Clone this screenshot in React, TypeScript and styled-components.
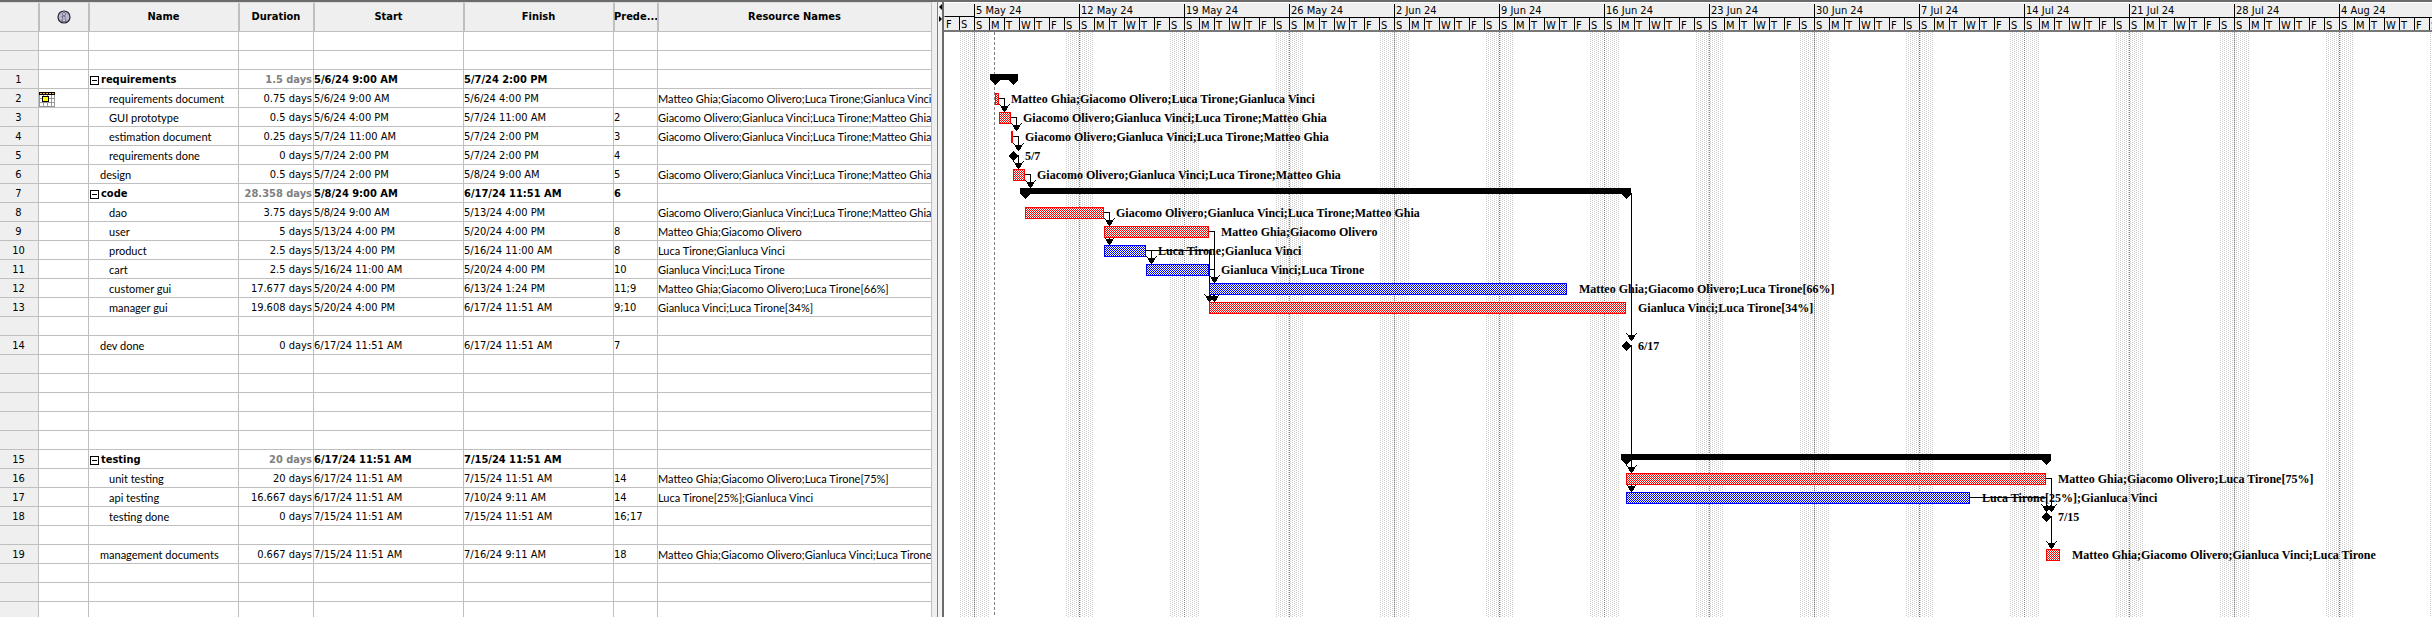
import React from 'react';
import styled, { createGlobalStyle, css } from 'styled-components';

const ROW = 19;
const DAY = 15;
const LINE = '#bfbfbf';
const PANEL = '#efefef';

const GlobalStyle = createGlobalStyle`
  * { box-sizing: border-box; }
  body {
    margin: 0;
    overflow: hidden;
    background: #fff;
    color: #000;
    font-family: 'DejaVu Sans Condensed', 'DejaVu Sans', sans-serif;
    font-stretch: condensed;
    font-size: 11px;
    line-height: 16px;
  }
`;

const Window = styled.main`
  display: flex;
  height: 100vh;
  overflow: hidden;
`;

const SheetPanel = styled.section`
  flex: none;
  display: flex;
  padding-right: 5px;
  border-top: 2px solid #6b6b6b;
  border-right: 1px solid #80838a;
  background: ${PANEL};
  overflow: hidden;
`;

const Sheet = styled.table`
  align-self: flex-start;
  width: 932px;
  table-layout: fixed;
  border-collapse: separate;
  border-spacing: 0;
  background: #fff;
`;

const HeadCell = styled.th`
  height: 30px;
  padding: 0;
  border-right: 1px solid ${LINE};
  border-bottom: 1px solid ${LINE};
  border-top: 1px solid #dcdcdc;
  background: ${PANEL};
  overflow: hidden;
  white-space: nowrap;
  text-align: center;
  & + & {
    box-shadow: inset 1px 0 ${LINE};
  }
`;

const cell = css`
  height: ${ROW}px;
  padding: 2px 1px 0 0;
  border-right: 1px solid ${LINE};
  border-bottom: 1px solid ${LINE};
  overflow: hidden;
  white-space: nowrap;
`;

const RowNumber = styled.th`
  ${cell}
  background: ${PANEL};
  font-weight: 400;
  text-align: center;
`;

const Cell = styled.td<{ $bold?: boolean; $muted?: boolean; $right?: boolean }>`
  ${cell}
  font-weight: ${(p) => (p.$bold ? 700 : 400)};
  color: ${(p) => (p.$muted ? '#808080' : '#000')};
  text-align: ${(p) => (p.$right ? 'right' : 'left')};
`;

const WordCell = styled(Cell)`
  font-family: ${(p) => (p.$bold ? 'inherit' : "Lato, 'DejaVu Sans Condensed', sans-serif")};
`;

const NameLine = styled.div<{ $indent: number }>`
  display: flex;
  align-items: center;
  gap: 2px;
  padding-left: ${(p) => p.$indent}px;
`;

const Toggle = styled.button`
  display: flex;
  align-items: center;
  justify-content: center;
  width: 9px;
  height: 9px;
  padding: 0;
  border: 1px solid #000;
  background: #fff;
  &::before {
    content: '';
    width: 5px;
    height: 1px;
    background: #000;
  }
`;

const Icon = styled.svg`
  display: block;
`;

const CenteredIcon = styled(Icon)`
  margin: 0 auto;
`;

const Splitter = styled.div`
  flex: none;
  display: flex;
  flex-direction: column;
  align-items: flex-end;
  gap: 6px;
  width: 4px;
  padding-top: 2px;
  border-top: 2px solid #6b6b6b;
  background: #f4f4f4;
`;

const SplitButton = styled.button`
  display: block;
  width: 3px;
  height: 6px;
  padding: 0;
  border: 0;
  background: none;
`;

const ChartPanel = styled.section`
  flex: 1;
  min-width: 0;
  display: flex;
  flex-direction: column;
  border-top: 2px solid #6b6b6b;
  border-left: 2px solid #6b6b6b;
  overflow: hidden;
`;

const Timescale = styled.header`
  flex: none;
  display: flex;
  height: 30px;
  padding-top: 1px;
  border-top: 1px solid #fff;
  border-bottom: 2px solid #777;
  background: ${PANEL};
  overflow: hidden;
`;

const Week = styled.div`
  flex: none;
  display: flex;
  flex-direction: column;
`;

const WeekLabel = styled.div<{ $blank: boolean }>`
  height: 14px;
  padding-left: 1px;
  border-left: 1px solid ${(p) => (p.$blank ? 'transparent' : '#000')};
  border-bottom: 1px solid #000;
  line-height: 14px;
`;

const Days = styled.div`
  display: flex;
`;

const Day = styled.span<{ $first: boolean }>`
  width: ${DAY}px;
  height: 13px;
  padding-left: 1px;
  border-left: 1px solid ${(p) => (p.$first ? 'transparent' : '#000')};
  line-height: 16px;
  overflow: hidden;
`;

const Canvas = styled.svg`
  flex: 1;
  min-height: 0;
  width: 100%;
  display: block;
  background: #fff;
  shape-rendering: crispEdges;
  text {
    font: 700 12px 'Liberation Serif', 'Times New Roman', serif;
    fill: #000;
  }
`;

type Task = {
  id: number;
  row: number;
  name: string;
  level: number;
  duration: string;
  start: string;
  finish: string;
  pred?: string;
  res?: string;
  kind: 'summary' | 'critical' | 'normal' | 'milestone';
  x1: number;
  x2: number;
  label?: string;
};

const MG = 'Matteo Ghia';
const GO = 'Giacomo Olivero';
const LT = 'Luca Tirone';
const GV = 'Gianluca Vinci';
const ALL = `${GO};${GV};${LT};${MG}`;

/* x1 and x2 are distances from the left edge of the chart, 15px to a day */
const tasks: Task[] = [
  { id: 1, row: 2, name: 'requirements', level: 0, duration: '1.5 days', start: '5/6/24 9:00 AM', finish: '5/7/24 2:00 PM', kind: 'summary', x1: 51, x2: 69 },
  { id: 2, row: 3, name: 'requirements document', level: 2, duration: '0.75 days', start: '5/6/24 9:00 AM', finish: '5/6/24 4:00 PM', res: `${MG};${GO};${LT};${GV}`, kind: 'critical', x1: 51, x2: 55 },
  { id: 3, row: 4, name: 'GUI prototype', level: 2, duration: '0.5 days', start: '5/6/24 4:00 PM', finish: '5/7/24 11:00 AM', pred: '2', res: ALL, kind: 'critical', x1: 55, x2: 67 },
  { id: 4, row: 5, name: 'estimation document', level: 2, duration: '0.25 days', start: '5/7/24 11:00 AM', finish: '5/7/24 2:00 PM', pred: '3', res: ALL, kind: 'critical', x1: 67, x2: 69 },
  { id: 5, row: 6, name: 'requirements done', level: 2, duration: '0 days', start: '5/7/24 2:00 PM', finish: '5/7/24 2:00 PM', pred: '4', kind: 'milestone', x1: 69, x2: 69, label: '5/7' },
  { id: 6, row: 7, name: 'design', level: 1, duration: '0.5 days', start: '5/7/24 2:00 PM', finish: '5/8/24 9:00 AM', pred: '5', res: ALL, kind: 'critical', x1: 69, x2: 81 },
  { id: 7, row: 8, name: 'code', level: 0, duration: '28.358 days', start: '5/8/24 9:00 AM', finish: '6/17/24 11:51 AM', pred: '6', kind: 'summary', x1: 81, x2: 682 },
  { id: 8, row: 9, name: 'dao', level: 2, duration: '3.75 days', start: '5/8/24 9:00 AM', finish: '5/13/24 4:00 PM', res: ALL, kind: 'critical', x1: 81, x2: 160 },
  { id: 9, row: 10, name: 'user', level: 2, duration: '5 days', start: '5/13/24 4:00 PM', finish: '5/20/24 4:00 PM', pred: '8', res: `${MG};${GO}`, kind: 'critical', x1: 160, x2: 265 },
  { id: 10, row: 11, name: 'product', level: 2, duration: '2.5 days', start: '5/13/24 4:00 PM', finish: '5/16/24 11:00 AM', pred: '8', res: `${LT};${GV}`, kind: 'normal', x1: 160, x2: 202 },
  { id: 11, row: 12, name: 'cart', level: 2, duration: '2.5 days', start: '5/16/24 11:00 AM', finish: '5/20/24 4:00 PM', pred: '10', res: `${GV};${LT}`, kind: 'normal', x1: 202, x2: 265 },
  { id: 12, row: 13, name: 'customer gui', level: 2, duration: '17.677 days', start: '5/20/24 4:00 PM', finish: '6/13/24 1:24 PM', pred: '11;9', res: `${MG};${GO};${LT}[66%]`, kind: 'normal', x1: 265, x2: 623 },
  { id: 13, row: 14, name: 'manager gui', level: 2, duration: '19.608 days', start: '5/20/24 4:00 PM', finish: '6/17/24 11:51 AM', pred: '9;10', res: `${GV};${LT}[34%]`, kind: 'critical', x1: 265, x2: 682 },
  { id: 14, row: 16, name: 'dev done', level: 1, duration: '0 days', start: '6/17/24 11:51 AM', finish: '6/17/24 11:51 AM', pred: '7', kind: 'milestone', x1: 682, x2: 682, label: '6/17' },
  { id: 15, row: 22, name: 'testing', level: 0, duration: '20 days', start: '6/17/24 11:51 AM', finish: '7/15/24 11:51 AM', kind: 'summary', x1: 682, x2: 1102 },
  { id: 16, row: 23, name: 'unit testing', level: 2, duration: '20 days', start: '6/17/24 11:51 AM', finish: '7/15/24 11:51 AM', pred: '14', res: `${MG};${GO};${LT}[75%]`, kind: 'critical', x1: 682, x2: 1102 },
  { id: 17, row: 24, name: 'api testing', level: 2, duration: '16.667 days', start: '6/17/24 11:51 AM', finish: '7/10/24 9:11 AM', pred: '14', res: `${LT}[25%];${GV}`, kind: 'normal', x1: 682, x2: 1026 },
  { id: 18, row: 25, name: 'testing done', level: 2, duration: '0 days', start: '7/15/24 11:51 AM', finish: '7/15/24 11:51 AM', pred: '16;17', kind: 'milestone', x1: 1102, x2: 1102, label: '7/15' },
  { id: 19, row: 27, name: 'management documents', level: 1, duration: '0.667 days', start: '7/15/24 11:51 AM', finish: '7/16/24 9:11 AM', pred: '18', res: `${MG};${GO};${GV};${LT}`, kind: 'critical', x1: 1102, x2: 1116 },
];

const ROW_COUNT = 31;
const rows = Array.from({ length: ROW_COUNT }, (_, i) => tasks.find((t) => t.row === i));
const columns = [39, 50, 150, 75, 150, 150, 44, 274];
const indents = [1, 11, 20];

/* [from x, from row, elbow x, target row]; arrows end on top of the target */
const links: [number, number, number, number][] = [
  [55, 3, 60, 4],
  [67, 4, 72, 5],
  [69, 5, 74, 6],
  [69, 6, 74, 7],
  [81, 7, 86, 8],
  [687, 8, 687, 16],
  [160, 9, 165, 10],
  [160, 9, 165, 11],
  [265, 10, 270, 13],
  [265, 10, 270, 14],
  [202, 11, 207, 12],
  [202, 11, 265, 14],
  [265, 12, 270, 13],
  [682, 16, 687, 23],
  [682, 16, 687, 24],
  [1102, 23, 1107, 25],
  [1026, 24, 1102, 25],
  [1102, 25, 1107, 27],
];

const weeks = [
  '5 May 24', '12 May 24', '19 May 24', '26 May 24', '2 Jun 24', '9 Jun 24', '16 Jun 24', '23 Jun 24',
  '30 Jun 24', '7 Jul 24', '14 Jul 24', '21 Jul 24', '28 Jul 24', '4 Aug 24',
];

const InfoIcon = () => (
  <CenteredIcon width="14" height="14" viewBox="0 0 14 14" role="img" aria-label="Indicators">
    <circle cx="7" cy="7" r="6" fill="#b9b9d6" stroke="#26262e" strokeWidth="1.2" />
    <circle cx="7" cy="4" r="1.5" fill="#e4e4f2" stroke="#55556a" strokeWidth="0.8" />
    <path d="M5 6.2h3v4h1.2v1.3H4.8v-1.3H6V7.3H5z" fill="#e4e4f2" stroke="#55556a" strokeWidth="0.8" />
  </CenteredIcon>
);

const CalendarIcon = () => (
  <Icon width="16" height="15" viewBox="0 0 16 15" shapeRendering="crispEdges" role="img" aria-label="Date constraint">
    <rect width="16" height="15" fill="#fff" />
    <path d="M0.5 3v12M4.5 3v12M8.5 3v12M12.5 3v12M15.5 3v12M0 6.5h16M0 10.5h16M0 14.5h16" stroke="#999" />
    <rect width="16" height="3" fill="#000" />
    <path d="M1 1.5h2M4 1.5h2M7 1.5h2M10 1.5h2M13 1.5h2" stroke="#ffb050" />
    <rect x="3.5" y="4.5" width="6" height="5" fill="#ff0" stroke="#000" />
  </Icon>
);

const Summary = ({ x1, x2, y }: { x1: number; x2: number; y: number }) => (
  <path
    d={`M${x1 - 5} ${y + 4}H${x2 + 5}V${y + 10}L${x2} ${y + 15}L${x2 - 5} ${y + 10}H${x1 + 5}L${x1} ${y + 15}L${x1 - 5} ${y + 10}Z`}
    fill="#000"
  />
);

const Mark = ({ task }: { task: Task }) => {
  const y = task.row * ROW;
  const { x1, x2, kind } = task;
  if (kind === 'summary') return <Summary x1={x1} x2={x2} y={y} />;
  if (kind === 'milestone') {
    return <path d={`M${x1} ${y + 5}l5 5l-5 5l-5 -5z`} fill="#000" />;
  }
  const color = kind === 'critical' ? '#f00' : '#00f';
  return (
    <>
      <rect x={x1} y={y + 4} width={x2 - x1} height={12} fill={color} />
      {x2 - x1 > 2 && (
        <rect x={x1 + 1} y={y + 5} width={x2 - x1 - 2} height={10} fill={`url(#${kind})`} />
      )}
    </>
  );
};

const Link = ({ link }: { link: [number, number, number, number] }) => {
  const [x, from, elbow, to] = link;
  const target = tasks.find((t) => t.row === to);
  const y = from * ROW + 9;
  const tip = to * ROW + (target?.kind === 'milestone' ? 5 : 4);
  return (
    <>
      <path d={`M${x} ${y + 0.5}H${elbow + 0.5}V${tip}`} fill="none" stroke="#000" />
      <path
        d={`M${elbow} ${tip}l-5 -8l3 2h5l3 -2l-5 8z`}
        fill="#000"
      />
    </>
  );
};

export default function App() {
  return (
    <>
      <GlobalStyle />
      <Window>
        <SheetPanel>
          <Sheet>
            <colgroup>
              {columns.map((w, i) => (
                <col key={i} width={w} />
              ))}
            </colgroup>
            <thead>
              <tr>
                <HeadCell />
                <HeadCell scope="col"><InfoIcon /></HeadCell>
                <HeadCell scope="col">Name</HeadCell>
                <HeadCell scope="col">Duration</HeadCell>
                <HeadCell scope="col">Start</HeadCell>
                <HeadCell scope="col">Finish</HeadCell>
                <HeadCell scope="col">Prede...</HeadCell>
                <HeadCell scope="col">Resource Names</HeadCell>
              </tr>
            </thead>
            <tbody>
              {rows.map((t, i) => {
                const bold = t?.kind === 'summary';
                return (
                  <tr key={i}>
                    <RowNumber scope="row">{t?.id}</RowNumber>
                    <Cell>{t?.id === 2 && <CalendarIcon />}</Cell>
                    <WordCell $bold={bold}>
                      {t && (
                        <NameLine $indent={indents[t.level]}>
                          {bold && <Toggle type="button" aria-label={`Collapse ${t.name}`} />}
                          {t.name}
                        </NameLine>
                      )}
                    </WordCell>
                    <Cell $bold={bold} $muted={bold} $right>{t?.duration}</Cell>
                    <Cell $bold={bold}>{t?.start}</Cell>
                    <Cell $bold={bold}>{t?.finish}</Cell>
                    <Cell $bold={bold}>{t?.pred}</Cell>
                    <WordCell>{t?.res}</WordCell>
                  </tr>
                );
              })}
            </tbody>
          </Sheet>
        </SheetPanel>
        <Splitter>
          <SplitButton type="button" aria-label="Collapse left">
            <Icon width="3" height="6" viewBox="0 0 3 6"><path d="M3 0v6L0 3z" /></Icon>
          </SplitButton>
          <SplitButton type="button" aria-label="Collapse right">
            <Icon width="3" height="6" viewBox="0 0 3 6"><path d="M0 0v6l3-3z" /></Icon>
          </SplitButton>
        </Splitter>
        <ChartPanel>
          <Timescale>
            {['', ...weeks].map((label, w) => (
              <Week key={w}>
                <WeekLabel $blank={!label}>{label}</WeekLabel>
                <Days>
                  {(label ? 'SMTWTFS' : 'FS').split('').map((d, i) => (
                    <Day key={i} $first={!label && i === 0}>{d}</Day>
                  ))}
                </Days>
              </Week>
            ))}
          </Timescale>
          <Canvas role="img" aria-label="Gantt chart">
            <defs>
              <pattern id="weekend" width="4" height="2" patternUnits="userSpaceOnUse">
                <path d="M0 0h1v1h-1zM2 1h1v1h-1z" fill="#cdcdcd" />
              </pattern>
              <pattern id="critical" width="2" height="2" patternUnits="userSpaceOnUse">
                <rect width="2" height="2" fill="#fff" />
                <path d="M0 0h1v1h-1zM1 1h1v1h-1z" fill="#f00" />
              </pattern>
              <pattern id="normal" width="2" height="2" patternUnits="userSpaceOnUse">
                <rect width="2" height="2" fill="#fff" />
                <path d="M0 0h1v1h-1zM1 1h1v1h-1z" fill="#00f" />
              </pattern>
            </defs>
            {[...weeks, ''].map((_, w) => {
              const x = 30 + w * DAY * 7;
              return (
                <g key={w}>
                  <rect x={x - 14} y={0} width={29} height="100%" fill="url(#weekend)" />
                  <line x1={x + 0.5} x2={x + 0.5} y1={0} y2="100%" stroke="#808080" strokeDasharray="1 1" />
                </g>
              );
            })}
            <line x1={50.5} x2={50.5} y1={0} y2="100%" stroke="#808080" strokeDasharray="3 2" />
            {links.map((l, i) => (
              <Link key={i} link={l} />
            ))}
            {tasks.map((t) => (
              <Mark key={t.id} task={t} />
            ))}
            {tasks.map((t) => (
              <text key={t.id} x={t.x2 + 12} y={t.row * ROW + 14}>
                {t.label ?? t.res}
              </text>
            ))}
          </Canvas>
        </ChartPanel>
      </Window>
    </>
  );
}
